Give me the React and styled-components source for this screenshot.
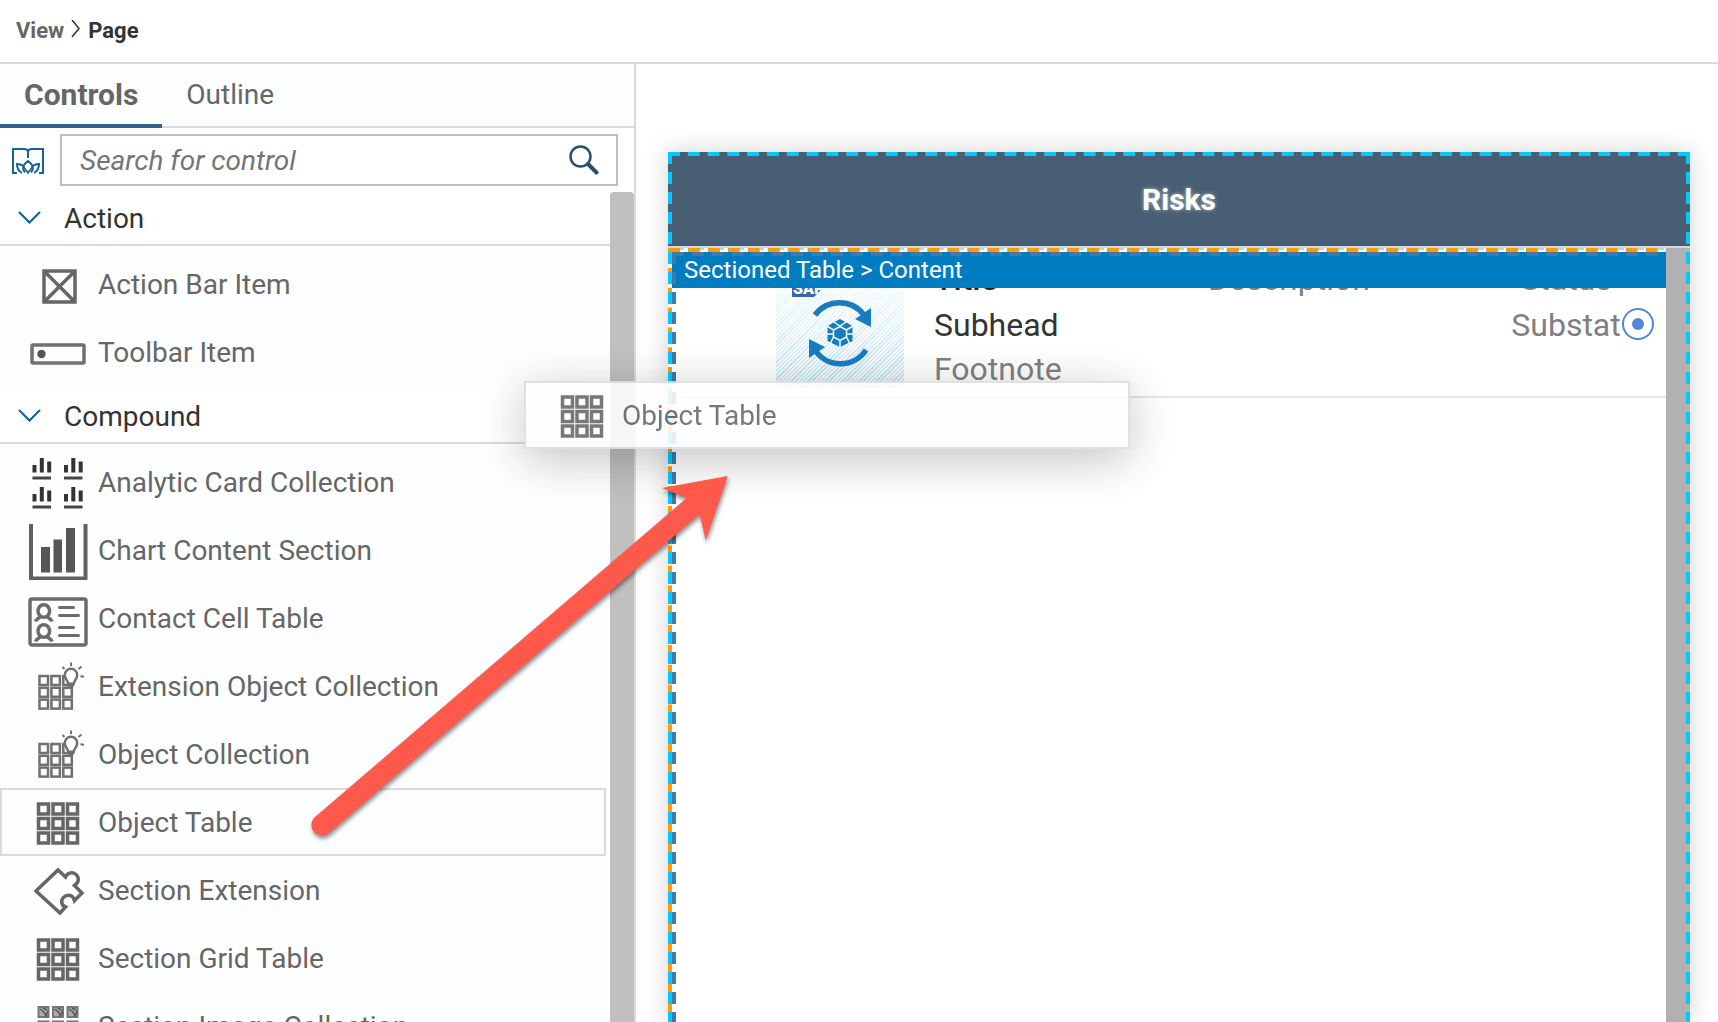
import React from "react";
import styled, { createGlobalStyle, css } from "styled-components";

const GlobalStyle = createGlobalStyle`
  * { box-sizing: border-box; }
  body { margin: 0; background: #fff; font-family: Roboto, "Liberation Sans", sans-serif; }
  button, input { font: inherit; color: inherit; }
`;

const line = "#d9dadf";
const cyan = "#06c8ff";
const orange = "#ff9a00";
const steel = "#4179ad";

const Screen = styled.div`
  position: relative;
  display: flex;
  flex-direction: column;
  height: 100vh;
  overflow: hidden;
`;

const Breadcrumb = styled.nav`
  display: flex;
  align-items: center;
  gap: 7px;
  flex: none;
  height: 64px;
  padding: 0 16px 2px;
  border-bottom: 2px solid ${line};
  font-size: 22px;
  font-weight: 700;
  color: #333;
`;

const Crumb = styled.a`
  color: #666;
  text-decoration: none;
`;

const Workspace = styled.div`
  display: flex;
  flex: 1;
  min-height: 0;
`;

const Palette = styled.aside`
  display: flex;
  flex-direction: column;
  flex: none;
  width: 636px;
  border-right: 2px solid ${line};
  font-size: 28px;
`;

const Tabs = styled.div`
  display: flex;
  flex: none;
  height: 64px;
  background: #fdfeff;
  box-shadow: inset 0 -2px ${line};
`;

const Tab = styled.button`
  padding: 0 24px;
  border: 0;
  border-bottom: 4px solid ${(p) => (p.$active ? "#346187" : "transparent")};
  background: none;
  color: #666;
  font-size: ${(p) => (p.$active ? 30 : 28)}px;
  font-weight: ${(p) => (p.$active ? 700 : 400)};
`;

const SearchRow = styled.form`
  display: flex;
  align-items: center;
  gap: 16px;
  flex: none;
  height: 64px;
  padding: 0 16px 0 12px;
`;

const IconButton = styled.button`
  display: flex;
  align-items: center;
  justify-content: center;
  flex: none;
  padding: 0;
  border: 0;
  background: none;
`;

const SearchBox = styled.label`
  display: flex;
  align-items: center;
  flex: 1;
  height: 52px;
  padding: 0 17px 0 18px;
  border: 2px solid #bfbfbf;
`;

const SearchInput = styled.input`
  flex: 1;
  min-width: 0;
  padding: 0;
  border: 0;
  outline: 0;
  background: none;
  &::placeholder { color: #757575; font-style: italic; opacity: 1; }
`;

const Scroller = styled.div`
  display: flex;
  flex: 1;
  min-height: 0;
`;

const Groups = styled.div`
  flex: 1;
  min-width: 0;
  overflow: hidden;
`;

const Thumb = styled.div`
  flex: none;
  width: 24px;
  border-radius: ${(p) => (p.$rounded ? "4px 4px 0 0" : "0")};
  background: ${(p) => p.$color};
`;

const GroupHeader = styled.button`
  display: flex;
  align-items: center;
  gap: 22px;
  width: 100%;
  height: 54px;
  padding: 0 18px;
  border: 0;
  border-bottom: 2px solid ${line};
  background: #fff;
  color: #333;
`;

const Items = styled.ul`
  margin: 0;
  padding: 4px 4px 4px 0;
  list-style: none;
  background: #fdfeff;
`;

const itemLook = css`
  display: flex;
  align-items: center;
  gap: 10px;
  height: 68px;
  padding: 0 26px;
  border: 2px solid transparent;
  background: #fdfeff;
  color: #666;
  font-size: 28px;
  text-align: left;
`;

const Item = styled.button`
  ${itemLook}
  width: 100%;
  border-color: ${(p) => (p.$selected ? line : "transparent")};
`;

const DragGhost = styled.div`
  ${itemLook}
  position: absolute;
  left: 524px;
  top: 381px;
  width: 606px;
  border-color: #dcdde0;
  box-shadow: 0 10px 50px rgba(0, 0, 0, 0.28);
  opacity: 0.88;
`;

const Canvas = styled.main`
  flex: 1;
  min-width: 0;
  display: flex;
  padding: 88px 28px 0 32px;
`;

const Device = styled.section`
  position: relative;
  display: flex;
  flex-direction: column;
  flex: 1;
  min-width: 0;
  background: #fff;
  box-shadow: 0 0 24px rgba(0, 0, 0, 0.18);
`;

const DeviceBar = styled.header`
  display: flex;
  align-items: center;
  justify-content: center;
  flex: none;
  height: 96px;
  border-bottom: 2px solid #d0d9e8;
  background: #475e75;
`;

const DeviceTitle = styled.h1`
  margin: 0;
  color: #fff;
  font-size: 30px;
  font-weight: 700;
  text-shadow: 0 0 4px rgba(255, 255, 255, 0.6);
`;

const DeviceBody = styled.div`
  display: flex;
  flex: 1;
  min-height: 0;
`;

const Section = styled.div`
  position: relative;
  flex: 1;
  min-width: 0;
`;

const Clip = styled.div`
  position: absolute;
  inset: 0;
  overflow: hidden;
  pointer-events: none;
`;

const DashRow = styled.div`
  position: absolute;
  top: ${(p) => p.$top || 0}px;
  left: ${(p) => p.$left || 0}px;
  right: ${(p) => p.$right || 0}px;
  height: 4px;
  background: linear-gradient(to right, ${(p) => p.$color} 60%, transparent 60%) 0 0 / 20px 4px round;
`;

const DashColumn = styled.div`
  position: absolute;
  top: ${(p) => p.$top || 0}px;
  bottom: 0;
  ${(p) => p.$side || "left"}: ${(p) => p.$offset || 0}px;
  width: 4px;
  background: linear-gradient(to bottom, ${(p) => p.$color} 60%, transparent 60%) 0 0 / 4px 20px ${(p) => (p.$fit ? "round" : "repeat")};
`;

const FaintDashes = styled.div`
  position: absolute;
  inset: 0 0 auto;
  height: 2px;
  background: repeating-linear-gradient(to right, #add8e6 0 6px, #fff 6px 10px);
`;

const SectionLabel = styled.div`
  position: absolute;
  top: 4px;
  left: 4px;
  right: 0;
  height: 36px;
  padding-left: 12px;
  background: #007cc0;
  color: #fff;
  font-size: 24px;
  line-height: 36px;
`;

const ObjectCell = styled.article`
  display: grid;
  grid-template-columns: 128px 274px 1fr 112px 32px;
  height: 150px;
  padding: 0 12px 0 108px;
  border-bottom: 2px solid #e5e5e5;
`;

const Picture = styled.div`
  position: relative;
  height: 128px;
  margin-top: 12px;
  &::before {
    content: "";
    position: absolute;
    inset: 0;
    background: repeating-linear-gradient(135deg, #b9dfec 0 1px, #eef8fc 1px 3px);
    mask-image: linear-gradient(to bottom, transparent, #000);
  }
  svg { position: relative; display: block; }
`;

const Lines = styled.div`
  display: flex;
  flex-direction: column;
  padding-top: 7px;
  padding-left: ${(p) => p.$indent || 0}px;
  align-items: ${(p) => p.$align || "flex-start"};
  font-size: ${(p) => p.$size || 32}px;
  line-height: 44px;
  color: #808080;
  white-space: nowrap;
`;

const Headline = styled.span`
  line-height: 48px;
  color: ${(p) => (p.$strong ? "#222" : "inherit")};
  font-weight: ${(p) => (p.$strong ? 500 : 400)};
`;

const Subhead = styled.span`
  color: #333;
`;

const Detail = styled(IconButton)`
  align-self: start;
  width: 32px;
  height: 32px;
  margin-top: 60px;
`;

const Arrow = styled.svg`
  position: absolute;
  left: 300px;
  top: 464px;
  filter: drop-shadow(1px 3px 2px rgba(0, 0, 0, 0.45));
  pointer-events: none;
`;

const Glyph = ({ children, color = "#666" }) => (
  <svg width="60" height="60" viewBox="0 0 60 60" fill="none" stroke={color} strokeWidth="3.5" aria-hidden="true">
    {children}
  </svg>
);

const three = [0, 1, 2];

const GridGlyph = () => (
  <Glyph>
    {three.map((r) => three.map((c) => (
      <rect key={`${r}${c}`} x={10.5 + c * 14.5} y={12 + r * 14.5} width="10" height="10" />
    )))}
  </Glyph>
);

const BulbGridGlyph = () => (
  <Glyph color="#707070">
    <g strokeWidth="2.5">
      {three.map((r) => three.map((c) => (
        <rect key={`${r}${c}`} x={11.5 + c * 11.9} y={20 + r * 11.8} width="8.5" height="9" />
      )))}
    </g>
    <path d="M40.500 28.500c0-3.500-3.700-5-3.700-9.500a6.200 6.200 0 0 1 12.400 0c0 4.500-3.700 6-3.700 9.500l-2.500 2.500z" fill="#fdfeff" strokeWidth="2.500" />
    <path d="M40 28.500h6" strokeWidth="4" />
    <path d="M43 6.500v3.500M34.500 11l2 2M53.500 10.500l-3 2.500M52.500 20l3.500 1" strokeWidth="2" />
  </Glyph>
);

const ActionGlyph = () => (
  <Glyph>
    <path d="M16 17h31v31H16zM16 17l31 31M47 17L16 48" />
  </Glyph>
);

const ToolbarGlyph = () => (
  <Glyph color="#707070">
    <rect x="4" y="23" width="52" height="18" rx="1" />
    <circle cx="13.500" cy="32" r="4.200" fill="#555" stroke="none" />
  </Glyph>
);

const AnalyticGlyph = () => (
  <Glyph color="#333">
    {[[0, 0], [31.500, 0], [0, 29], [31.500, 29]].map(([x, y]) => (
      <g key={`${x}-${y}`} transform={`translate(${x} ${y})`}>
        <path d="M6.500 13v7.500M13.800 6v14.500M21.200 9.500v11" strokeWidth="4" />
        <path d="M4.500 26h18.500" strokeWidth="3" stroke="#444" />
      </g>
    ))}
  </Glyph>
);

const ChartGlyph = () => (
  <Glyph color="#606163">
    <path d="M3 4v54.500h54.500V4" strokeWidth="4" />
    <path d="M13 27h9v25.500h-9zM25.500 19.500h8.500v33h-8.500zM38 8h9v44.500h-9z" fill="#555658" stroke="none" />
  </Glyph>
);

const ContactGlyph = () => (
  <Glyph color="#6a6b6d">
    <rect x="2" y="11" width="56" height="46" rx="2" />
    {[0, 20].map((y) => (
      <g key={y} transform={`translate(0 ${y})`}>
        <ellipse cx="15.800" cy="23" rx="5.800" ry="6.300" strokeWidth="3.500" />
        <path d="M7.500 33.500c1-3 3.500-3 5-5M24 33.500c-1-3-3.500-3-5-5" strokeWidth="3.500" />
        <path d="M31.500 19.500h14M31.500 27.500h19" strokeWidth="3" strokeLinecap="round" />
      </g>
    ))}
  </Glyph>
);

const PuzzleGlyph = () => (
  <Glyph>
    <path d="M8 31L30 10l7.500 7c2-4.500 7-5.500 10.500-2.500s3 8-1.500 11l7.500 7.500-7.500 7.500c-1.500-6-7-6.500-10.500-3.500s-3 8.500 1.500 10L32 53z" />
  </Glyph>
);

const ImagesGlyph = () => (
  <Glyph color="#777">
    {three.map((r) => three.map((c) => (
      <g key={`${r}${c}`} transform={`translate(${c * 14.5} ${r * 14.5})`}>
        <rect x="10.500" y="11" width="10" height="10" fill="#aaa" strokeWidth="2" />
        <path d="M12 13l4 3 2 4 2-5M15 12l4 2" strokeWidth="1.500" stroke="#555" />
      </g>
    )))}
  </Glyph>
);

const GROUPS = [
  { title: "Action", items: [["Action Bar Item", ActionGlyph], ["Toolbar Item", ToolbarGlyph]] },
  {
    title: "Compound",
    items: [
      ["Analytic Card Collection", AnalyticGlyph],
      ["Chart Content Section", ChartGlyph],
      ["Contact Cell Table", ContactGlyph],
      ["Extension Object Collection", BulbGridGlyph],
      ["Object Collection", BulbGridGlyph],
      ["Object Table", GridGlyph],
      ["Section Extension", PuzzleGlyph],
      ["Section Grid Table", GridGlyph],
      ["Section Image Collection", ImagesGlyph],
    ],
  },
];

const ControlPalette = () => (
  <Palette>
    <Tabs role="tablist">
      <Tab role="tab" aria-selected="true" $active>Controls</Tab>
      <Tab role="tab" aria-selected="false">Outline</Tab>
    </Tabs>
    <SearchRow onSubmit={(e) => e.preventDefault()}>
      <IconButton type="button" aria-label="Control documentation">
        <svg width="32" height="28" viewBox="0 0 32 28" fill="none" stroke="#16619c" strokeWidth="2">
          <path d="M5 27H1V3h11c2 0 4 1 4 3 0-2 2-3 4-3h11v24h-4M16 6v6" />
          <path d="M13 26.500c-3-4-3-6.500 3-11.500 6 5 6 7.500 3 11.500M11.500 20c-2-1.500-4-2-6.500-2 0 4 1.500 7 5 9M20.500 20c2-1.500 4-2 6.500-2 0 4-1.500 7-5 9" />
          <path d="M11.500 20c1 3 3 4 4.500 7 1.500-3 3.500-4 4.500-7" strokeWidth="1.500" />
        </svg>
      </IconButton>
      <SearchBox>
        <SearchInput type="text" placeholder="Search for control" aria-label="Search for control" />
        <IconButton type="submit" aria-label="Search">
          <svg width="30" height="30" viewBox="0 0 30 30" fill="none" stroke="#2b506f">
            <circle cx="11.500" cy="11.500" r="10" strokeWidth="2.500" />
            <path d="M19 19l8.500 8.500" strokeWidth="4" strokeLinecap="round" />
          </svg>
        </IconButton>
      </SearchBox>
    </SearchRow>
    <Scroller>
      <Groups>
        {GROUPS.map(({ title, items }) => (
          <section key={title}>
            <GroupHeader aria-expanded="true">
              <svg width="24" height="14" viewBox="0 0 24 14" fill="none" stroke="#0f5f9c" strokeWidth="2" strokeLinecap="round">
                <path d="M1.500 1.500L11.500 11.500L21.500 1.500" />
              </svg>
              {title}
            </GroupHeader>
            <Items>
              {items.map(([name, Icon]) => (
                <li key={name}>
                  <Item $selected={name === "Object Table"}><Icon />{name}</Item>
                </li>
              ))}
            </Items>
          </section>
        ))}
      </Groups>
      <Thumb $color="#c0c0c0" $rounded />
    </Scroller>
  </Palette>
);

const SyncPicture = () => (
  <svg width="128" height="128" viewBox="0 0 128 128" aria-hidden="true">
    <path d="M16 14h44L38 37H16z" fill="#3566ae" />
    <text x="17" y="34" fill="#fff" fontSize="16" fontWeight="900" fontFamily="Roboto, sans-serif">SAP</text>
    <g fill="none" stroke="#187cc1" strokeWidth="5.500">
      <path d="M39 55a30.500 30.500 0 0 1 49 0" />
      <path d="M90 90a30.500 30.500 0 0 1-51 0" />
    </g>
    <path d="M95 48v19l-16-8zM33 79v19l16-11z" fill="#187cc1" />
    <path d="M64 59l12.500 7v15L64 87l-12.500-6V66z" fill="#187cc1" />
    <g fill="none" stroke="#eef8fc" strokeWidth="1.500">
      <path d="M64 66.500l6.500 3.500v7L64 80.500 57.500 77v-7z" />
      <path d="M64 80.500V88M57.500 70L51 66M70.500 70l6.500-4M51 74h6.500M70.500 74H77M57.500 77l-3.500 7M70.500 77l3.500 7M58 62l6 4 6-4" />
    </g>
  </svg>
);

const Preview = () => (
  <Canvas>
    <Device>
      <DeviceBar><DeviceTitle>Risks</DeviceTitle></DeviceBar>
      <DeviceBody>
        <Section>
          <ObjectCell>
            <Picture><SyncPicture /></Picture>
            <Lines $indent={30}>
              <Headline $strong>Title</Headline>
              <Subhead>Subhead</Subhead>
              <span>Footnote</span>
            </Lines>
            <Lines $indent={30}>
              <Headline>Description</Headline>
            </Lines>
            <Lines $align="center">
              <Headline>Status</Headline>
              <span>Substat</span>
            </Lines>
            <Detail aria-label="Details">
              <svg width="32" height="32" viewBox="0 0 32 32">
                <circle cx="16" cy="16" r="15" fill="none" stroke="#5189d6" strokeWidth="2" />
                <circle cx="16" cy="16" r="6" fill="#5189d6" />
              </svg>
            </Detail>
          </ObjectCell>
          <SectionLabel>Sectioned Table &gt; Content</SectionLabel>
          <Clip>
            <FaintDashes />
            <DashRow $color={orange} />
            <DashColumn $color={orange} $fit />
            <DashRow $color={steel} $top={4} $left={4} />
            <DashColumn $color={steel} $top={4} $offset={4} />
          </Clip>
        </Section>
        <Thumb $color="#b1b1b1" />
      </DeviceBody>
      <Clip>
        <DashRow $color={cyan} $right={-8} />
        <DashColumn $color={cyan} />
        <DashColumn $color={cyan} $side="right" />
      </Clip>
    </Device>
  </Canvas>
);

export default function App() {
  return (
    <Screen>
      <GlobalStyle />
      <Breadcrumb aria-label="Breadcrumb">
        <Crumb href="#view">View</Crumb>
        <svg width="10" height="20" viewBox="0 0 10 20" fill="none" stroke="#333" strokeWidth="1.500" aria-hidden="true">
          <path d="M1 0l7 8.500L1 17" />
        </svg>
        <span>Page</span>
      </Breadcrumb>
      <Workspace>
        <ControlPalette />
        <Preview />
      </Workspace>
      <DragGhost><GridGlyph />Object Table</DragGhost>
      <Arrow width="450" height="390" viewBox="300 464 450 390" aria-hidden="true">
        <path
          d="M727.700 476L662 488l24.700 10L315 817a10.500 10.500 0 0 0 14 16L699.700 514l6 26.500z"
          fill="#ff594b"
        />
      </Arrow>
    </Screen>
  );
}
